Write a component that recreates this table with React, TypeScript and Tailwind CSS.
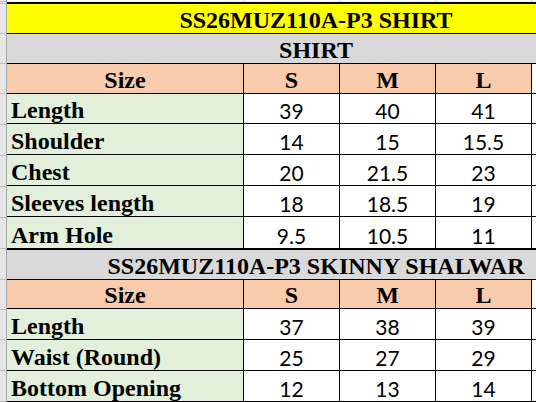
import React from 'react';

const serif = { fontFamily: '"Liberation Serif", "Times New Roman", serif' };
const sans = { fontFamily: 'Lato, Calibri, "Open Sans", sans-serif' };

type Row = [string, string, string, string];

const shirtRows: Row[] = [
    ['Length', '39', '40', '41'],
    ['Shoulder', '14', '15', '15.5'],
    ['Chest', '20', '21.5', '23'],
    ['Sleeves length', '18', '18.5', '19'],
    ['Arm Hole', '9.5', '10.5', '11'],
];

const shalwarRows: Row[] = [
    ['Length', '37', '38', '39'],
    ['Waist (Round)', '25', '27', '29'],
    ['Bottom Opening', '12', '13', '14'],
];

// gutter segments, same heights as the rows on the right
const gutter = [2, 2, 30, 30, 30, 31, 31, 31, 31, 31, 31, 30, 30, 31, 31, 31];

const TitleRow = ({ text, bg, thick }: { text: string, bg: string, thick?: boolean }) => (
    <div
        className={`flex h-[30px] w-[618px] items-end justify-center border-b border-black pb-[1px] text-[24px] font-bold leading-none text-black ${bg} ${thick ? 'h-[32px] border-t-2' : ''}`}
        style={serif}
    >
        {text}
    </div>
);

const HeaderRow = () => (
    <div className="flex h-[30px] w-[618px] border-b border-black text-[24px] font-bold leading-none text-black" style={serif}>
        <div className="flex w-[237px] items-end justify-center border-r border-black bg-[#f8cbad] pb-[1px]">Size</div>
        <div className="flex w-[96px] items-end justify-center border-r border-black bg-[#f8cbad] pb-[1px]">S</div>
        <div className="flex w-[96px] items-end justify-center border-r border-black bg-[#f8cbad] pb-[1px]">M</div>
        <div className="flex w-[96px] items-end justify-center border-r border-black bg-[#f8cbad] pb-[1px]">L</div>
        <div className="flex-1 bg-white" />
    </div>
);

const DataRow = ({ row, last }: { row: Row, last?: boolean }) => (
    <div className={`flex h-[31px] w-[618px] border-black text-black ${last ? '' : 'border-b'}`}>
        <div
            className="flex w-[237px] items-end border-r border-black bg-[#e2efda] pb-[1px] pl-[4px] text-[24px] font-bold leading-none"
            style={serif}
        >
            {row[0]}
        </div>
        {row.slice(1).map((v, i) => (
            <div
                key={i}
                className="flex w-[96px] items-end justify-center border-r border-black bg-white pb-[2px] text-[21px] leading-none"
                style={sans}
            >
                {v}
            </div>
        ))}
        <div className="flex-1 bg-white" />
    </div>
);

export default function App() {
    return (
        <div className="flex h-[402px] w-[536px] overflow-hidden bg-white">
            <div className="flex w-[7px] shrink-0 flex-col border-r border-[#a6a6a6] bg-[#e6e6e6]">
                {gutter.map((h, i) => (
                    <div key={i} className="shrink-0 border-b border-[#bdbdbd]" style={{ height: h }} />
                ))}
            </div>

            <div className="flex shrink-0 flex-col">
                <div className="flex h-[2px] w-[618px]">
                    <div className="w-[237px] border-r border-[#d4d4d4]" />
                    <div className="w-[96px] border-r border-[#d4d4d4]" />
                    <div className="w-[96px] border-r border-[#d4d4d4]" />
                    <div className="w-[96px] border-r border-[#d4d4d4]" />
                </div>
                <div className="h-[2px] w-[618px] bg-black" />
                <TitleRow text="SS26MUZ110A-P3 SHIRT" bg="bg-[#ffff00]" />
                <TitleRow text="SHIRT" bg="bg-[#d9d9d9]" />
                <HeaderRow />
                {shirtRows.map((r, i) => (
                    <DataRow key={i} row={r} last={i === shirtRows.length - 1} />
                ))}
                <TitleRow text="SS26MUZ110A-P3 SKINNY SHALWAR" bg="bg-[#d9d9d9]" thick />
                <HeaderRow />
                {shalwarRows.map((r, i) => (
                    <DataRow key={i} row={r} />
                ))}
            </div>
        </div>
    );
}
